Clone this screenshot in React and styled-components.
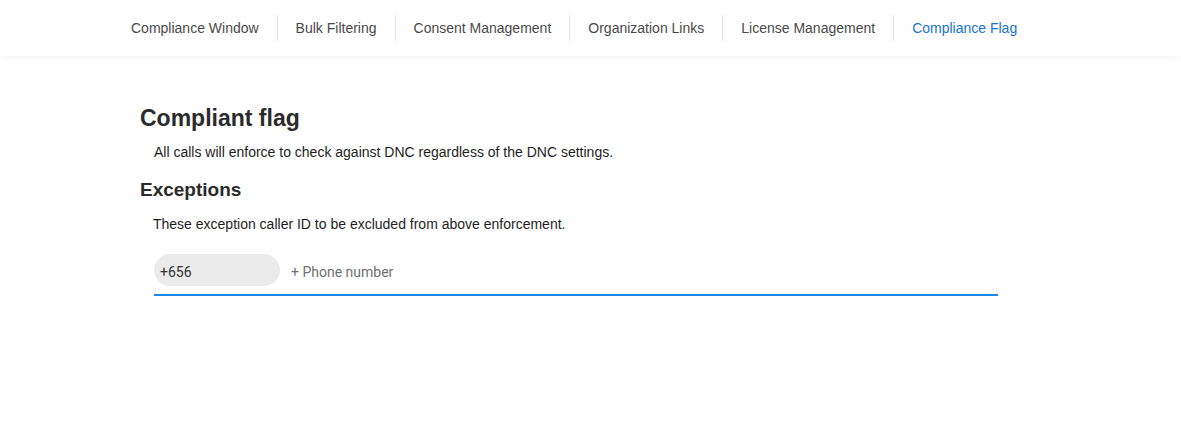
import React, { useState } from "react";
import styled, { createGlobalStyle } from "styled-components";

const GlobalStyle = createGlobalStyle`
  html, body {
    margin: 0;
    padding: 0;
    background: #ffffff;
    font-family: "Liberation Sans", Arial, sans-serif;
  }
`;

const tabs = [
  "Compliance Window",
  "Bulk Filtering",
  "Consent Management",
  "Organization Links",
  "License Management",
  "Compliance Flag",
];

export default function App() {
  const [active, setActive] = useState("Compliance Flag");
  const [phone, setPhone] = useState("");

  return (
    <>
      <GlobalStyle />
      <NavBar>
        {tabs.map((tab) => (
          <Tab key={tab} $active={tab === active} onClick={() => setActive(tab)}>
            {tab}
          </Tab>
        ))}
      </NavBar>
      <Content>
        <Title>Compliant flag</Title>
        <Description>
          All calls will enforce to check against DNC regardless of the DNC settings.
        </Description>
        <SubTitle>Exceptions</SubTitle>
        <Hint>These exception caller ID to be excluded from above enforcement.</Hint>
        <ChipField>
          <Chip>+656</Chip>
          <PhoneInput
            type="text"
            placeholder="+ Phone number"
            value={phone}
            onChange={(e) => setPhone(e.target.value)}
          />
        </ChipField>
      </Content>
    </>
  );
}

const NavBar = styled.nav`
  height: 56px;
  display: flex;
  align-items: center;
  padding-left: 113px;
  background: #ffffff;
  box-shadow: 0 2px 8px rgba(0, 0, 0, 0.05);
  position: relative;
`;

const Tab = styled.div`
  height: 26px;
  display: flex;
  align-items: center;
  padding: 0 18px;
  font-size: 14px;
  color: ${(p) => (p.$active ? "#1a73d8" : "#4a4a4a")};
  cursor: pointer;

  & + & {
    border-left: 1px solid #e6e6e6;
  }
`;

const Content = styled.main`
  padding: 48px 140px 0;
`;

const Title = styled.h1`
  margin: 0;
  font-size: 23px;
  line-height: 28px;
  font-weight: 700;
  color: #2b2b2b;
`;

const Description = styled.p`
  margin: 10px 0 0 14px;
  font-size: 14px;
  line-height: 20px;
  color: #1e1e1e;
`;

const SubTitle = styled.h2`
  margin: 16px 0 0;
  font-size: 19px;
  line-height: 24px;
  font-weight: 700;
  color: #2b2b2b;
`;

const Hint = styled.p`
  margin: 12px 0 0 13px;
  font-size: 14px;
  line-height: 20px;
  color: #1e1e1e;
`;

const ChipField = styled.div`
  margin: 20px 0 0 14px;
  width: 844px;
  display: flex;
  align-items: center;
  gap: 11px;
  padding-bottom: 8px;
  border-bottom: 2px solid #1f88e5;
`;

const Chip = styled.span`
  width: 126px;
  height: 32px;
  box-sizing: border-box;
  padding: 3px 0 0 6px;
  display: flex;
  align-items: center;
  border-radius: 16px;
  background: #ebebeb;
  font-family: Roboto, "Liberation Sans", sans-serif;
  font-size: 14px;
  color: #333333;
`;

const PhoneInput = styled.input`
  flex: 1;
  border: none;
  outline: none;
  padding: 3px 0 0;
  background: transparent;
  font-family: Roboto, "Liberation Sans", sans-serif;
  font-size: 14px;
  color: #333333;

  &::placeholder {
    color: #707070;
  }
`;
